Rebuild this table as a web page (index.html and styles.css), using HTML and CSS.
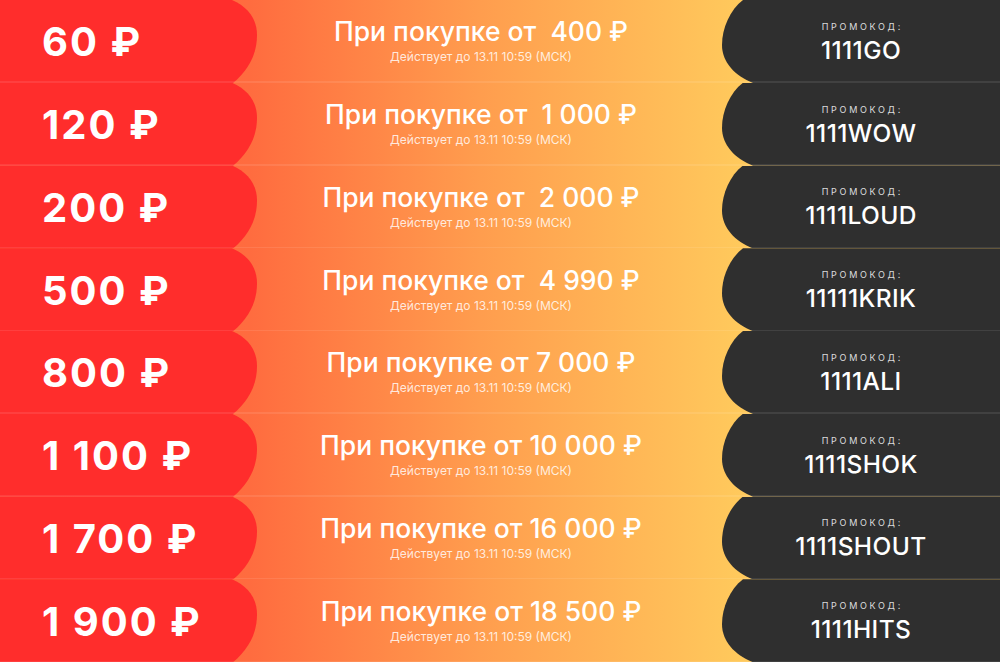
FILE: index.html
```html
<!DOCTYPE html>
<html lang="ru">
<head>
<meta charset="utf-8">
<title>Промокоды</title>
<link rel="stylesheet" href="styles.css">
</head>
<body>
<div class="list">
  <div class="row">
    <div class="amount">60 ₽</div>
    <div class="cond"><div class="title">При покупке от&nbsp; 400 ₽</div><div class="sub">Действует до 13.11 10:59 (МСК)</div></div>
    <div class="promo"><div class="label">ПРОМОКОД:</div><div class="code">1111GO</div></div>
  </div>
  <div class="row">
    <div class="amount">120 ₽</div>
    <div class="cond"><div class="title">При покупке от&nbsp; 1 000 ₽</div><div class="sub">Действует до 13.11 10:59 (МСК)</div></div>
    <div class="promo"><div class="label">ПРОМОКОД:</div><div class="code">1111WOW</div></div>
  </div>
  <div class="row">
    <div class="amount">200 ₽</div>
    <div class="cond"><div class="title">При покупке от&nbsp; 2 000 ₽</div><div class="sub">Действует до 13.11 10:59 (МСК)</div></div>
    <div class="promo"><div class="label">ПРОМОКОД:</div><div class="code">1111LOUD</div></div>
  </div>
  <div class="row">
    <div class="amount">500 ₽</div>
    <div class="cond"><div class="title">При покупке от&nbsp; 4 990 ₽</div><div class="sub">Действует до 13.11 10:59 (МСК)</div></div>
    <div class="promo"><div class="label">ПРОМОКОД:</div><div class="code">11111KRIK</div></div>
  </div>
  <div class="row">
    <div class="amount">800 ₽</div>
    <div class="cond"><div class="title">При покупке от 7 000 ₽</div><div class="sub">Действует до 13.11 10:59 (МСК)</div></div>
    <div class="promo"><div class="label">ПРОМОКОД:</div><div class="code">1111ALI</div></div>
  </div>
  <div class="row">
    <div class="amount">1 100 ₽</div>
    <div class="cond"><div class="title">При покупке от 10 000 ₽</div><div class="sub">Действует до 13.11 10:59 (МСК)</div></div>
    <div class="promo"><div class="label">ПРОМОКОД:</div><div class="code">1111SHOK</div></div>
  </div>
  <div class="row">
    <div class="amount">1 700 ₽</div>
    <div class="cond"><div class="title">При покупке от 16 000 ₽</div><div class="sub">Действует до 13.11 10:59 (МСК)</div></div>
    <div class="promo"><div class="label">ПРОМОКОД:</div><div class="code">1111SHOUT</div></div>
  </div>
  <div class="row">
    <div class="amount">1 900 ₽</div>
    <div class="cond"><div class="title">При покупке от 18 500 ₽</div><div class="sub">Действует до 13.11 10:59 (МСК)</div></div>
    <div class="promo"><div class="label">ПРОМОКОД:</div><div class="code">1111HITS</div></div>
  </div>
</div>
</body>
</html>
```
FILE: styles.css
```css
* { box-sizing: border-box; margin: 0; padding: 0; }
html, body { width: 1000px; height: 662px; overflow: hidden; background: #2f2f2f; }
body { font-family: Inter, "Noto Sans", "DejaVu Sans", sans-serif; color: #fff; }

.list {
  display: grid;
  grid-template-rows: repeat(8, 1fr);
  height: 662px;
}

.row {
  position: relative;
  display: flex;
  align-items: stretch;
  background: linear-gradient(to right, #ff5f3a 0px, #ff6c3f 250px, #ff9d4e 480px, #ffc95c 740px, #ffca5c 1000px);
}
.row::after {
  content: "";
  position: absolute;
  left: 0; right: 0; bottom: 0;
  height: 1.5px;
  background: rgba(255, 255, 255, 0.09);
}

.amount {
  width: 258px;
  flex: none;
  background: #ff2d2c;
  clip-path: path('M0,0 H232 C248,7 257,19 257,35 C257,55 248,70 233,83 H0 Z');
  display: flex;
  align-items: center;
  padding-left: 42px;
  padding-top: 1px;
  font-size: 40px;
  font-weight: 700;
  letter-spacing: 2px;
  white-space: nowrap;
}

.cond {
  flex: 1;
  display: flex;
  flex-direction: column;
  align-items: center;
  justify-content: center;
  padding-right: 18px;
  padding-bottom: 2px;
  gap: 4px;
}
.title {
  font-size: 26.5px;
  font-weight: 500;
  line-height: 30px;
  white-space: nowrap;
}
.sub {
  font-size: 12px;
  font-weight: 400;
  color: rgba(255, 255, 255, 0.82);
  line-height: 14px;
}

.promo {
  width: 278px;
  flex: none;
  background: #2f2f2f;
  clip-path: path('M21,0 H278 V83 H31 C13,76 0,62 0,45 C0,28 8,10 21,0 Z');
  display: flex;
  flex-direction: column;
  align-items: center;
  justify-content: center;
  gap: 5px;
  padding-top: 2px;
}
.label {
  font-size: 9px;
  letter-spacing: 2.7px;
  margin-right: -2.7px;
  color: rgba(255, 255, 255, 0.85);
  line-height: 11px;
}
.code {
  font-size: 24.5px;
  font-weight: 500;
  letter-spacing: 0.4px;
  line-height: 27px;
  white-space: nowrap;
}
```
